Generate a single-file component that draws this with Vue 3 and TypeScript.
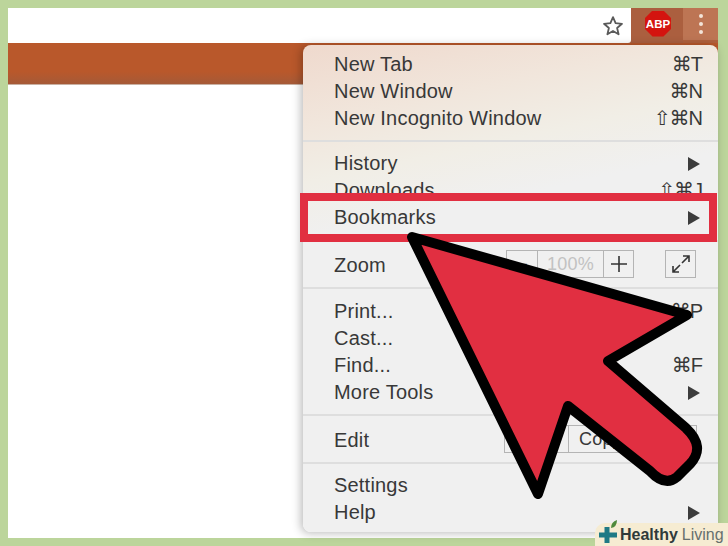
<script setup lang="ts">
interface MenuItem {
  label: string
  shortcut?: string
  submenu?: boolean
  selected?: boolean
}

const newItems: MenuItem[] = [
  { label: 'New Tab', shortcut: '⌘T' },
  { label: 'New Window', shortcut: '⌘N' },
  { label: 'New Incognito Window', shortcut: '⇧⌘N' },
]

const historyItems: MenuItem[] = [
  { label: 'History', submenu: true },
  { label: 'Downloads', shortcut: '⇧⌘J' },
  { label: 'Bookmarks', submenu: true, selected: true },
]

const toolItems: MenuItem[] = [
  { label: 'Print...', shortcut: '⌘P' },
  { label: 'Cast...' },
  { label: 'Find...', shortcut: '⌘F' },
  { label: 'More Tools', submenu: true },
]

const settingsItems: MenuItem[] = [
  { label: 'Settings' },
  { label: 'Help', submenu: true },
]

const groups = [
  { name: 'new', items: newItems },
  { name: 'history', items: historyItems },
  { name: 'zoom', items: [] as MenuItem[] },
  { name: 'tools', items: toolItems },
  { name: 'edit', items: [] as MenuItem[] },
  { name: 'settings', items: settingsItems },
]
</script>

<template>
  <div class="page">
    <div class="window">
      <header class="toolbar">
        <div class="omnibox">
          <svg class="star" width="22" height="22" viewBox="0 0 22 22">
            <path
              d="M11 2.2l2.6 6 6.4.6-4.9 4.2 1.5 6.3L11 16l-5.6 3.3 1.5-6.3L2 8.8l6.4-.6z"
              fill="none"
              stroke="#5a5a5a"
              stroke-width="1.8"
              stroke-linejoin="round"
            />
          </svg>
        </div>
        <div class="abp-slot">
          <div class="abp">ABP</div>
        </div>
        <div class="kebab">
          <span class="dot"></span>
          <span class="dot"></span>
          <span class="dot"></span>
        </div>
      </header>
      <div class="band"></div>

      <div class="menu">
        <section v-for="group in groups" :key="group.name" class="group" :class="group.name">
          <div
            v-for="item in group.items"
            :key="item.label"
            class="row"
            :class="{ selected: item.selected }"
          >
            <span>{{ item.label }}</span>
            <span v-if="item.shortcut" class="shortcut">{{ item.shortcut }}</span>
            <span v-if="item.submenu" class="caret"></span>
          </div>

          <div v-if="group.name === 'zoom'" class="row tall">
            <span>Zoom</span>
            <div class="zoom-controls">
              <div class="segments">
                <span class="seg minus">−</span>
                <span class="seg percent">100%</span>
                <span class="seg plus">
                  <svg width="16" height="16" viewBox="0 0 16 16">
                    <path d="M8 0v16M0 8h16" stroke="#333" stroke-width="1.6" />
                  </svg>
                </span>
              </div>
              <div class="fullscreen">
                <svg width="24" height="24" viewBox="0 0 24 24">
                  <path
                    d="M14 4h6v6M20 4l-7 7M10 20H4v-6M4 20l7-7"
                    fill="none"
                    stroke="#333"
                    stroke-width="1.6"
                  />
                </svg>
              </div>
            </div>
          </div>

          <div v-if="group.name === 'edit'" class="row tall">
            <span>Edit</span>
            <div class="segments edit-controls">
              <span class="seg edit-seg">Cut</span>
              <span class="seg edit-seg">Copy</span>
              <span class="seg edit-seg">Paste</span>
            </div>
          </div>
        </section>
      </div>

      <svg class="arrow" width="728" height="546" viewBox="0 0 728 546">
        <path
          d="M412 237L687 315L608 361L686 428Q706 447 690 464L677 477Q665 487 650 471L568 406L538 494Z"
          fill="#e12f41"
          stroke="#000"
          stroke-width="10"
          stroke-linejoin="round"
        />
      </svg>
    </div>

    <div class="badge">
      <svg class="badge-icon" width="24" height="28" viewBox="0 0 24 28">
        <path d="M7.5 8h5v5.500H20v5h-7.500V24h-5v-5.500H2v-5h5.500z" fill="#1f7a85" />
        <path d="M14 9Q14 3 20 1Q20 8 14 9z" fill="#4f8a3c" />
      </svg>
      <span class="healthy">Healthy</span>
      <span class="living">Living</span>
    </div>
  </div>
</template>

<style>
html,
body {
  margin: 0;
  overflow: hidden;
}
</style>

<style scoped>
.page {
  position: relative;
  box-sizing: border-box;
  width: 728px;
  height: 546px;
  padding: 8px 10px 8px 8px;
  display: flex;
  background: #bcd59b;
  font-family: 'Liberation Sans', Arial, sans-serif;
  overflow: hidden;
}

.window {
  flex: 1;
  background: #fff;
}

.toolbar {
  display: flex;
  height: 35px;
  background: #b0603c;
}

.omnibox {
  flex: 1;
  display: flex;
  align-items: center;
  justify-content: flex-end;
  height: 35px;
  padding-right: 7px;
  background: #fff;
  border-bottom-right-radius: 3px;
}

.abp-slot {
  width: 52px;
  display: flex;
  align-items: center;
  justify-content: center;
  padding-left: 2px;
  box-sizing: border-box;
  background: #ab5f3f;
}

.abp {
  width: 26px;
  height: 26px;
  display: flex;
  align-items: center;
  justify-content: center;
  margin-top: -4px;
  background: #d4140f;
  clip-path: polygon(29% 0, 71% 0, 100% 29%, 100% 71%, 71% 100%, 29% 100%, 0 71%, 0 29%);
  color: #fff;
  font-size: 11.5px;
  font-weight: 700;
}

.kebab {
  width: 35px;
  height: 32px;
  display: flex;
  flex-direction: column;
  align-items: center;
  justify-content: center;
  gap: 4px;
  background: #bd7554;
}

.dot {
  width: 4px;
  height: 4px;
  border-radius: 50%;
  background: #f3e4d8;
}

.band {
  height: 41px;
  background: linear-gradient(#b9582b 70%, #a55a38);
  border-bottom: 1px solid #c9b0a2;
}

.menu {
  position: absolute;
  left: 303px;
  top: 45px;
  width: 415px;
  height: 487px;
  box-sizing: border-box;
  padding-top: 6px;
  border-radius: 8px;
  background: linear-gradient(168deg, #efd9cd 0, #f1e6dc 14%, #f1eee6 24%, #f0f0f0 34%);
  box-shadow: -2px 1px 10px rgba(0, 0, 0, 0.28);
  color: #383838;
  font-size: 20px;
  letter-spacing: 0.2px;
}

.group {
  padding-bottom: 8px;
  margin-bottom: 8px;
  border-bottom: 2px solid #dedede;
}

.group.history {
  padding-bottom: 9px;
  margin-bottom: 9px;
}

.group.zoom {
  padding-top: 1px;
  padding-bottom: 9px;
  margin-bottom: 9px;
}

.group.tools {
  margin-bottom: 11px;
}

.group.edit {
  padding-bottom: 9px;
}

.group.settings {
  padding-bottom: 0;
  margin-bottom: 0;
  border-bottom: 0;
}

.row {
  position: relative;
  height: 27px;
  line-height: 27px;
  display: flex;
  justify-content: space-between;
  align-items: center;
  padding: 0 15px 0 31px;
}

.row.tall {
  height: 26px;
}

.row.selected::after {
  content: '';
  position: absolute;
  left: -3px;
  right: 1px;
  top: -11px;
  bottom: -11px;
  border: 8px solid #e12f41;
  pointer-events: none;
}

.shortcut {
  margin-right: 1px;
  font-family: 'Liberation Sans', 'DejaVu Sans', sans-serif;
  letter-spacing: -1px;
}

.caret {
  width: 0;
  height: 0;
  margin-right: 3px;
  border-top: 7px solid transparent;
  border-bottom: 7px solid transparent;
  border-left: 12px solid #3c3c3c;
}

.zoom-controls {
  display: flex;
  align-items: center;
  gap: 31px;
  margin-top: -2px;
  margin-right: 7px;
}

.segments {
  display: flex;
  height: 28px;
  box-sizing: border-box;
  border: 1px solid #b4b4b4;
}

.seg {
  display: flex;
  align-items: center;
  justify-content: center;
  border-left: 1px solid #b4b4b4;
}

.seg:first-child {
  border-left: 0;
}

.minus {
  width: 30px;
}

.percent {
  width: 65px;
  color: #c2c2c2;
  font-size: 18px;
}

.plus {
  width: 29px;
}

.fullscreen {
  width: 31px;
  height: 28px;
  box-sizing: border-box;
  display: flex;
  align-items: center;
  justify-content: center;
  border: 1px solid #b4b4b4;
}

.edit-controls {
  margin-right: 6px;
  margin-top: -2px;
}

.edit-seg {
  width: 63px;
  font-size: 18px;
}

.arrow {
  position: absolute;
  left: 0;
  top: 0;
}

.badge {
  position: absolute;
  left: 595px;
  top: 523px;
  width: 133px;
  height: 23px;
  box-sizing: border-box;
  display: flex;
  align-items: center;
  padding-left: 25px;
  gap: 4px;
  border-top-left-radius: 10px;
  background: #f6ecd2;
  font-size: 16px;
  line-height: 23px;
}

.badge-icon {
  position: absolute;
  left: 2px;
  top: -4px;
}

.healthy {
  font-weight: 700;
  color: #2f3a3a;
}

.living {
  color: #66706e;
}
</style>
